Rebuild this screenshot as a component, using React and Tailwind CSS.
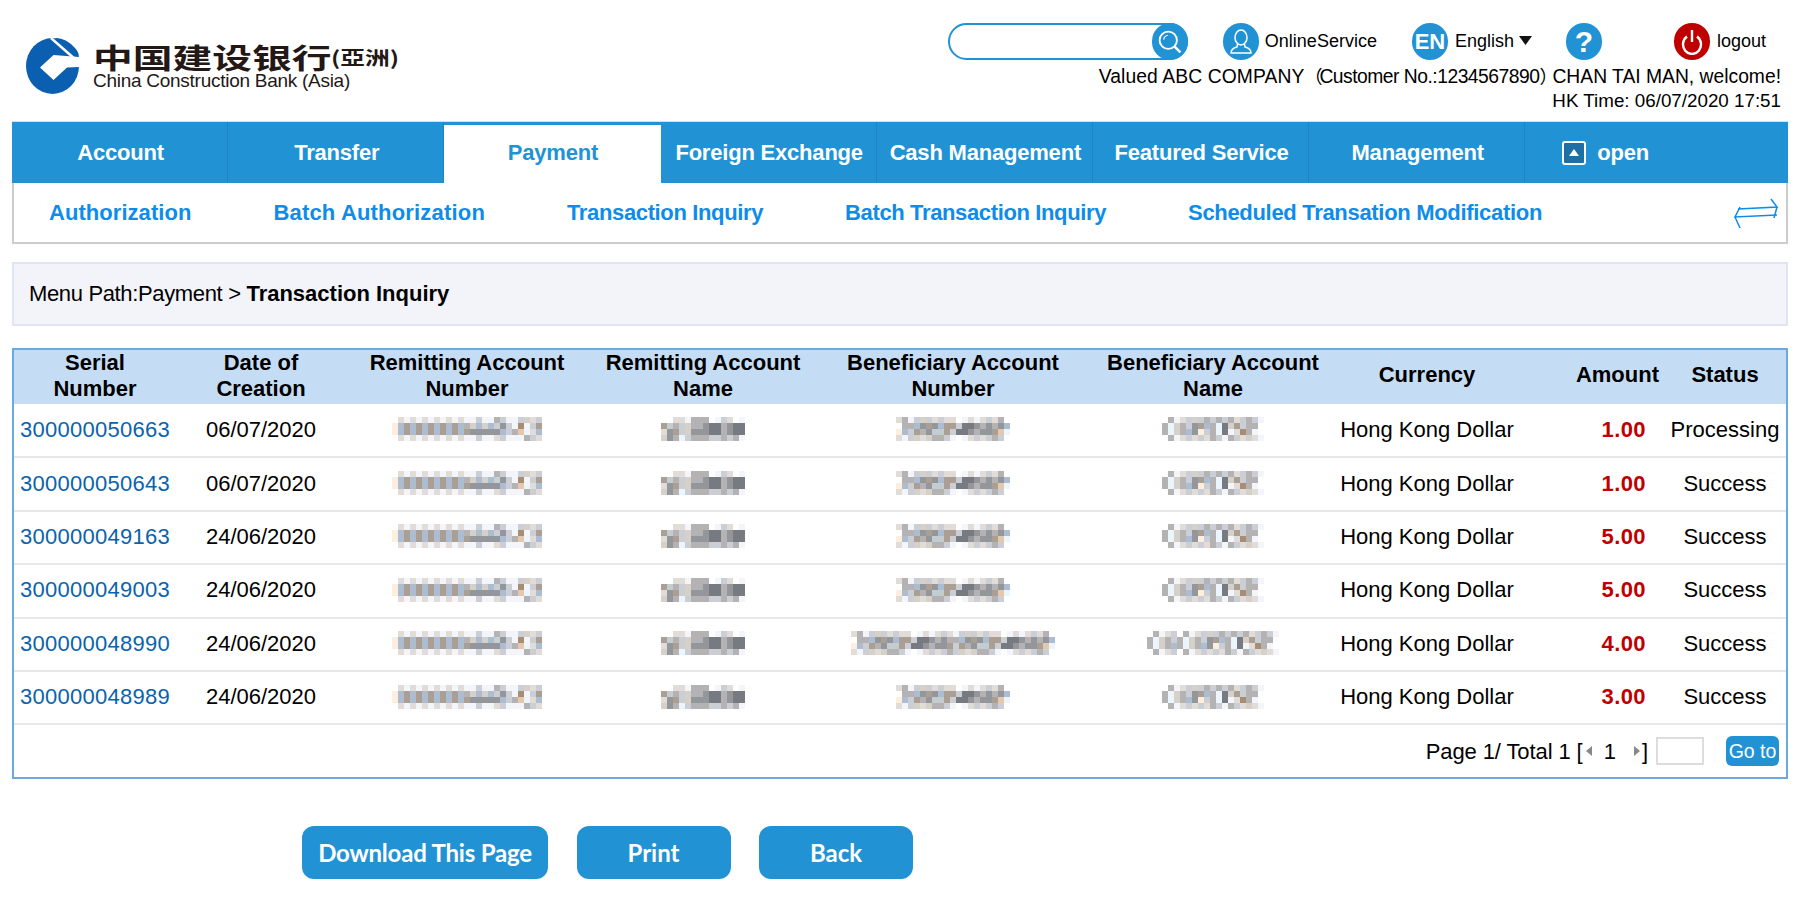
const NAV = ['Account', 'Transfer', 'Payment', 'Foreign Exchange', 'Cash Management', 'Featured Service', 'Management']
const SUB_NAV = [
  { label: 'Authorization', cls: 'tracking-[0.05px]' },
  { label: 'Batch Authorization', cls: 'tracking-[0.18px]' },
  { label: 'Transaction Inquiry', cls: 'tracking-[-0.36px]' },
  { label: 'Batch Transaction Inquiry', cls: 'tracking-[-0.37px]' },
  { label: 'Scheduled Transation Modification', cls: 'tracking-[-0.31px]' },
]

const PALETTE = {
  w: '#f3f5fa', l: '#e2dcd9', g: '#ccced6', s: '#b4b2b3', b: '#adbdd1', t: '#ab9f94', m: '#93979c',
  d: '#777a80', o: '#feeedd', p: '#e5c7ad', n: '#a68d74', c: '#c3cdd0', y: '#d5d0c8', i: '#eaf6fb',
}

const REM_NUMBER = [
  '.lwlwlwlwlwlwwgwwsgwwgylg',
  'obtbtbtbtbtbsybybgmgwnwgt',
  'obtbtbtbtbtbtmmmmmbgspilb',
  '.lwlwlwlwlwlwwgwwlgwwwsgl',
]
const REM_NAME = [
  '..llwsss.wgl.w',
  'tcsgyssmddsmdd',
  'lmtgymmmddsmdd',
  'ymsigsssggsgsw',
]
const BEN_ACC = [
  'lswgyglgll.wlwlgls.',
  '.ssbmtmbttgddmsmsmb',
  'obgtsmcctgddmsmmtpi',
  'lwgylyssgw.wlglgsg.',
]
const BEN_NAME = [
  '.swlgygsgsgslgsgw',
  'siysgmtbsidytgss.',
  'siysbmogsidwlnsw.',
  '.swlglglsgwsglylw',
]
const BEN_ACC_LONG = BEN_ACC.map((r) => r.slice(0, 17) + r.slice(2))
const BEN_NAME_LONG = BEN_NAME.map((r) => r.slice(0, 5) + r)

const ROWS = [
  { serial: '300000050663', date: '06/07/2020', amount: '1.00', status: 'Processing' },
  { serial: '300000050643', date: '06/07/2020', amount: '1.00', status: 'Success' },
  { serial: '300000049163', date: '24/06/2020', amount: '5.00', status: 'Success' },
  { serial: '300000049003', date: '24/06/2020', amount: '5.00', status: 'Success' },
  { serial: '300000048990', date: '24/06/2020', amount: '4.00', status: 'Success', long: true },
  { serial: '300000048989', date: '24/06/2020', amount: '3.00', status: 'Success' },
]

// mosaic over the masked account data
function Blur({ rows }) {
  const w = rows[0].length * 6
  return (
    <svg width={w} height={24} viewBox={`0 0 ${w} 24`} shapeRendering="crispEdges" className="block mx-auto">
      {rows.map((row, y) =>
        row.split('').map((c, x) =>
          c === '.' ? null : <rect key={`${x}-${y}`} x={x * 6} y={y * 6} width={6} height={6} fill={PALETTE[c]} />
        )
      )}
    </svg>
  )
}

function Logo() {
  return (
    <div className="flex items-start">
      <svg width="53" height="56" viewBox="0 0 53 56">
        <ellipse cx="26.5" cy="28" rx="26.5" ry="28" fill="#0a5fb0" />
        <path d="M30 0 Q40 0 49 10 Q53 14 53 20 L44 24 Z" fill="#0a5fb0" />
        <path d="M14 29.5 L27.5 17 L53 19 L53 29 L41 29.5 L27.5 42 Z" fill="#fff" />
        <path d="M25 0 L50 22" stroke="#fff" strokeWidth="2.5" />
      </svg>
      <div className="ml-[14px] mt-[5px] text-[#231815]">
        <div className="flex items-center h-[28px]">
          <span className="font-['Noto_Sans_CJK_SC',sans-serif] font-bold text-[28px] leading-[28px] w-[238px] whitespace-nowrap origin-left scale-x-[1.42] inline-block">中国建设银行</span>
          <span className="font-['Noto_Sans_CJK_TC',sans-serif] font-bold text-[19px] leading-[22px] whitespace-nowrap origin-left scale-x-[1.3] inline-block">(亞洲)</span>
        </div>
        <div className="mt-[1px] text-[19px] leading-[18px] tracking-[-0.27px] whitespace-nowrap">China Construction Bank (Asia)</div>
      </div>
    </div>
  )
}

function TopBar() {
  return (
    <div className="flex items-center text-[18px] text-black">
      <div className="relative w-[240px] h-[37px] rounded-full border-2 border-[#2193d5] bg-white">
        <span className="absolute right-[-2px] top-[-2px] w-[36px] h-[37px] rounded-full bg-[#2193d5] flex items-center justify-center">
          <svg width="30" height="30" viewBox="0 0 26 26" fill="none" stroke="#fff" strokeWidth="1.6">
            <circle cx="11.5" cy="11.5" r="7.5" />
            <path d="M17 17 L22 22" strokeWidth="2.2" />
            <path d="M7.5 11 A4.5 4.5 0 0 1 11 7.2" strokeWidth="1" />
          </svg>
        </span>
      </div>
      <span className="ml-[35px] w-[36px] h-[37px] rounded-full bg-[#2193d5] flex items-center justify-center">
        <svg width="26" height="28" viewBox="0 0 26 28" fill="none" stroke="#fff" strokeWidth="1.5">
          <ellipse cx="13" cy="9.5" rx="6" ry="7.5" />
          <path d="M9.5 16 L9 19 Q3 20.5 3 25 L23 25 Q23 20.5 17 19 L16.5 16" />
        </svg>
      </span>
      <span className="ml-[6px]">OnlineService</span>
      <span className="ml-[35px] w-[36px] h-[37px] rounded-full bg-[#2193d5] flex items-center justify-center text-white text-[22px] font-bold">EN</span>
      <span className="ml-[7px]">English</span>
      <svg width="13" height="9" viewBox="0 0 13 9" className="ml-[5px] mb-[2px]"><path d="M0 0 H13 L6.5 9 Z" fill="#111" /></svg>
      <span className="ml-[34px] w-[36px] h-[37px] rounded-full bg-[#2193d5] flex items-center justify-center text-white text-[30px] font-bold">?</span>
      <span className="ml-[72px] w-[36px] h-[37px] rounded-full bg-[#c00000] flex items-center justify-center">
        <svg width="24" height="26" viewBox="0 0 24 26" fill="none" stroke="#fff" strokeWidth="2.4">
          <path d="M7 7.5 A9 9.5 0 1 0 17 7.5" />
          <path d="M12 1 V13" />
        </svg>
      </span>
      <span className="ml-[7px]">logout</span>
    </div>
  )
}

function Pager() {
  return (
    <div className="h-[52px] flex items-center justify-end pr-[7px] text-[22px] text-black">
      <span className="tracking-[-0.1px]">Page 1/ Total 1 [</span>
      <svg width="6" height="10" viewBox="0 0 6 10" className="ml-[3px]"><path d="M6 0 V10 L0 5 Z" fill="#888" /></svg>
      <span className="ml-[12px]">1</span>
      <svg width="6" height="10" viewBox="0 0 6 10" className="ml-[18px]"><path d="M0 0 V10 L6 5 Z" fill="#888" /></svg>
      <span className="ml-[2px]">]</span>
      <input className="ml-[8px] w-[48px] h-[28px] border-2 border-[#ddd] bg-white" />
      <button className="ml-[22px] w-[53px] h-[30px] rounded-md bg-[#2193d5] text-white text-[19.5px] leading-none">Go to</button>
    </div>
  )
}

export default function App() {
  return (
    <div className="min-h-[920px] bg-white font-['Liberation_Sans','Noto_Sans_CJK_SC',sans-serif] text-black">
      <div className="h-[121px] flex justify-between">
        <div className="pl-[26px] pt-[38px]">
          <Logo />
        </div>
        <div className="pt-[23px] pr-[19px] flex flex-col items-end">
          <div className="mr-[15px]">
            <TopBar />
          </div>
          <div className="mt-[5px] text-[19.3px] leading-[24px] whitespace-nowrap">
            <span className="tracking-[0.1px]">Valued ABC COMPANY</span>
            <span className="text-[18px] tracking-[-3px]">（</span>
            <span className="tracking-[-0.5px]">Customer No.:1234567890</span>
            <span className="text-[18px] tracking-[-5px]">）</span>
            CHAN TAI MAN, welcome!
          </div>
          <div className="text-[18.8px] leading-[24px] whitespace-nowrap">HK Time: 06/07/2020 17:51</div>
        </div>
      </div>

      <div className="px-[12px]">
        <div className="flex h-[62px] bg-[#2193d5] border-t border-[#dddddd] text-[22px] font-bold text-white tracking-[-0.2px]">
          {NAV.map((item) =>
            item === 'Payment' ? (
              <div key={item} className="w-[216.2px] flex items-center justify-center pb-[3px] pl-[1px] bg-white border-t-[3px] border-[#2193d5] text-[#2193d5]">{item}</div>
            ) : (
              <div key={item} className="w-[216.2px] flex items-center justify-center pl-[2px] border-r border-[#1f85c2] whitespace-nowrap">{item}</div>
            )
          )}
          <div className="flex-1 flex items-center pl-[37px]">
            <span className="w-[24px] h-[24px] rounded-[3px] border-2 border-white bg-[#1d6fa5] flex items-center justify-center">
              <svg width="10" height="7" viewBox="0 0 10 7"><path d="M5 0 L10 7 H0 Z" fill="#fff" /></svg>
            </span>
            <span className="ml-[11px]">open</span>
          </div>
        </div>

        <div className="h-[61px] flex items-center justify-between pl-[35px] pr-[7px] border-x-2 border-b-2 border-[#cccccc] text-[22px] font-bold text-[#0f8ce9]">
          <div className="flex gap-[82px] whitespace-nowrap">
            {SUB_NAV.map((item) => <span key={item.label} className={item.cls}>{item.label}</span>)}
          </div>
          <svg width="46" height="30" viewBox="0 0 46 30" fill="none" stroke="#0f8ce9" strokeWidth="1.5">
            <path d="M5 11 L44 9 L38 1" />
            <path d="M44 9 L41 20" />
            <path d="M44 17 L2 19 L7 9" />
            <path d="M2 19 L7 30" />
          </svg>
        </div>

        <div className="mt-[18px] h-[64px] flex items-center pl-[15px] pb-[1px] bg-[#f2f4fa] border-2 border-[#e2e4f4] text-[22px]">
          <span className="tracking-[-0.35px]">Menu Path:Payment &gt;&nbsp;</span><b>Transaction Inquiry</b>
        </div>

        <div className="mt-[22px] border-2 border-[#6aa9e2]">
          <table className="w-full table-fixed border-collapse text-[22px]">
            <colgroup>
              <col className="w-[162px]" />
              <col className="w-[170px]" />
              <col className="w-[242px]" />
              <col className="w-[230px]" />
              <col className="w-[270px]" />
              <col className="w-[250px]" />
              <col className="w-[178px]" />
              <col className="w-[148px]" />
              <col className="w-[122px]" />
            </colgroup>
            <thead>
              <tr className="h-[54px] bg-[#c5ddf4] leading-[26px] font-bold">
                <th className="pb-[2px]">Serial<br />Number</th>
                <th className="pb-[2px]">Date of<br />Creation</th>
                <th className="pb-[2px]">Remitting Account<br />Number</th>
                <th className="pb-[2px]">Remitting Account<br />Name</th>
                <th className="pb-[2px]">Beneficiary Account<br />Number</th>
                <th className="pb-[2px]">Beneficiary Account<br />Name</th>
                <th className="pb-[4px]">Currency</th>
                <th className="pb-[4px] text-right pr-[5px]">Amount</th>
                <th className="pb-[4px]">Status</th>
              </tr>
            </thead>
            <tbody>
              {ROWS.map((r) => (
                <tr key={r.serial} className="h-[53.4px] border-b-2 border-[#e8e8e8] text-center">
                  <td className="pb-[2px] text-[#0a63ad] tracking-[0.25px]">{r.serial}</td>
                  <td className="pb-[2px]">{r.date}</td>
                  <td className="pb-[2px]"><Blur rows={REM_NUMBER} /></td>
                  <td className="pb-[2px]"><Blur rows={REM_NAME} /></td>
                  <td className="pb-[2px]"><Blur rows={r.long ? BEN_ACC_LONG : BEN_ACC} /></td>
                  <td className="pb-[2px]"><Blur rows={r.long ? BEN_NAME_LONG : BEN_NAME} /></td>
                  <td className="pb-[2px] whitespace-nowrap">Hong Kong Dollar</td>
                  <td className="pb-[2px] text-right pr-[18px] font-bold text-[#c00000] tracking-[0.4px]">{r.amount}</td>
                  <td className="pb-[2px]">{r.status}</td>
                </tr>
              ))}
            </tbody>
          </table>
          <Pager />
        </div>

        <div className="mt-[47px] ml-[290px] flex gap-[28.5px] font-['Lato',sans-serif] text-[24px] font-bold text-white">
          <button className="w-[246px] h-[53px] rounded-[12px] bg-[#2193d5] whitespace-nowrap tracking-[-0.2px]">Download This Page</button>
          <button className="w-[154px] h-[53px] rounded-[12px] bg-[#2193d5]">Print</button>
          <button className="w-[154px] h-[53px] rounded-[12px] bg-[#2193d5]">Back</button>
        </div>
      </div>
    </div>
  )
}
